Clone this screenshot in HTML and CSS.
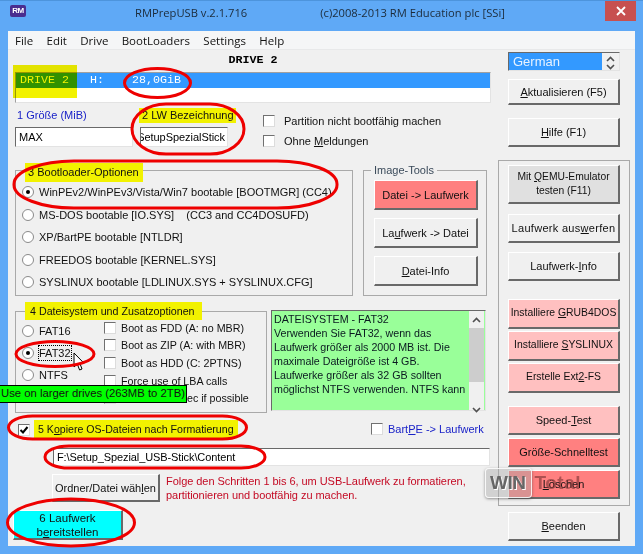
FILE: index.html
```html
<!DOCTYPE html>
<html lang="de">
<head>
<meta charset="utf-8">
<title>RMPrepUSB</title>
<link rel="stylesheet" href="styles.css">
</head>
<body>
<div class="window">
  <header class="titlebar">
    <span class="appicon">RM</span>
    <span class="title-a">RMPrepUSB v.2.1.716</span>
    <span class="title-b">(c)2008-2013 RM Education plc [SSi]</span>
    <span class="close"><svg width="10" height="10" viewBox="0 0 10 10"><path d="M1 1L9 9M9 1L1 9" stroke="#fff" stroke-width="1.8"/></svg></span>
  </header>
  <div class="client">
    <nav class="menu"><span>File</span><span>Edit</span><span>Drive</span><span>BootLoaders</span><span>Settings</span><span>Help</span></nav>
    <div class="panes">
      <main class="left">
        <div class="drive-title">DRIVE 2</div>
        <div class="listbox"><div class="list-row">DRIVE 2   H:    28,0GiB</div></div>
        <div class="row-fields">
          <div class="field-size">
            <div class="cap blue">1 Größe (MiB)</div>
            <div class="input">MAX</div>
          </div>
          <div class="field-name">
            <div class="cap"><span class="hl">2 LW Bezeichnung</span></div>
            <div class="input clip"><span>SetupSpezialStick</span></div>
          </div>
          <div class="field-checks">
            <label class="check"><i class="box"></i><span>Partition nicht bootfähig machen</span></label>
            <label class="check"><i class="box"></i><span>Ohne <u>M</u>eldungen</span></label>
          </div>
        </div>
        <div class="row-groups">
          <section class="group boot">
            <div class="legend hl">3 Bootloader-Optionen</div>
            <div class="radio"><i class="dot on"></i><span>WinPEv2/WinPEv3/Vista/Win7 bootable [BOOTMGR] (CC4)</span></div>
            <div class="radio"><i class="dot"></i><span>MS-DOS bootable [IO.SYS]    (CC3 and CC4DOSUFD)</span></div>
            <div class="radio"><i class="dot"></i><span>XP/BartPE bootable [NTLDR]</span></div>
            <div class="radio"><i class="dot"></i><span>FREEDOS bootable [KERNEL.SYS]</span></div>
            <div class="radio"><i class="dot"></i><span>SYSLINUX bootable [LDLINUX.SYS + SYSLINUX.CFG]</span></div>
          </section>
          <section class="group tools">
            <div class="legend plain">Image-Tools</div>
            <button class="btn red">Datei -&gt; Laufwerk</button>
            <button class="btn">La<u>u</u>fwerk -&gt; Datei</button>
            <button class="btn"><u>D</u>atei-Info</button>
          </section>
        </div>
        <div class="row-fs">
          <section class="group fs">
            <div class="legend hl">4 Dateisystem und Zusatzoptionen</div>
            <div class="fs-radios">
              <div class="radio"><i class="dot"></i><span>FAT16</span></div>
              <div class="radio"><i class="dot on"></i><span class="focus">FAT32</span></div>
              <div class="radio"><i class="dot"></i><span>NTFS</span></div>
            </div>
            <div class="fs-checks">
              <label class="check"><i class="box"></i><span>Boot as FDD (A: no MBR)</span></label>
              <label class="check"><i class="box"></i><span>Boot as ZIP (A: with MBR)</span></label>
              <label class="check"><i class="box"></i><span>Boot as HDD (C: 2PTNS)</span></label>
              <label class="check"><i class="box"></i><span>Force use of LBA calls</span></label>
              <label class="check"><i class="box"></i><span>Use 64hd/32sec if possible</span></label>
            </div>
          </section>
          <div class="infobox">
            <div class="info-text">DATEISYSTEM - FAT32<br>Verwenden Sie FAT32, wenn das<br>Laufwerk größer als 2000 MB ist. Die<br>maximale Dateigröße ist 4 GB.<br>Laufwerke größer als 32 GB sollten<br>möglichst NTFS verwenden. NTFS kann</div>
            <div class="scroll">
              <svg class="chev" width="9" height="6" viewBox="0 0 9 6"><path d="M1 5L4.5 1.5L8 5" fill="none" stroke="#505050" stroke-width="1.6"/></svg>
              <div class="thumb"></div>
              <svg class="chev" width="9" height="6" viewBox="0 0 9 6"><path d="M1 1L4.5 4.5L8 1" fill="none" stroke="#505050" stroke-width="1.6"/></svg>
            </div>
          </div>
        </div>
        <div class="row-copy">
          <i class="box checked"><svg width="10" height="10" viewBox="0 0 10 10"><path d="M1.5 5L4 7.5L8.5 2" fill="none" stroke="#000" stroke-width="2"/></svg></i>
          <span class="hl copy-label">5 K<u>o</u>piere OS-Dateien nach Formatierung</span>
          <label class="check bart"><i class="box"></i><span class="blue">Bart<u>P</u>E -&gt; Laufwerk</span></label>
        </div>
        <div class="input path">F:\Setup_Spezial_USB-Stick\Content</div>
        <div class="row-folder">
          <button class="btn folder">Ordner/Datei wäh<u>l</u>en</button>
          <p class="hint">Folge den Schritten 1 bis 6, um USB-Laufwerk zu formatieren,<br>partitionieren und bootfähig zu machen.</p>
        </div>
        <button class="btn cyan">6 Laufwerk<br>b<u>e</u>reitstellen</button>
      </main>
      <aside class="right">
        <div class="combo">
          <span class="combo-val">German</span>
          <span class="spin">
            <svg width="9" height="6" viewBox="0 0 9 6"><path d="M1 5L4.5 1.5L8 5" fill="none" stroke="#505050" stroke-width="1.6"/></svg>
            <svg width="9" height="6" viewBox="0 0 9 6"><path d="M1 1L4.5 4.5L8 1" fill="none" stroke="#505050" stroke-width="1.6"/></svg>
          </span>
        </div>
        <button class="btn side refresh"><u>A</u>ktualisieren (F5)</button>
        <button class="btn side help"><u>H</u>ilfe (F1)</button>
        <section class="group actions">
          <div class="cluster wide">
            <button class="btn qemu">Mit <u>Q</u>EMU-Emulator<br>testen (F11)</button>
            <button class="btn loose">Laufwerk aus<u>w</u>erfen</button>
            <button class="btn">Laufwerk-<u>I</u>nfo</button>
          </div>
          <div class="cluster tight">
            <button class="btn rose small">Installiere <u>G</u>RUB4DOS</button>
            <button class="btn rose small">Installiere <u>S</u>YSLINUX</button>
            <button class="btn rose small">Erstelle Ext<u>2</u>-FS</button>
          </div>
          <div class="cluster tight">
            <button class="btn rose">Speed-<u>T</u>est</button>
            <button class="btn red">Größe-Schnelltest</button>
            <button class="btn red"><u>L</u>öschen</button>
          </div>
        </section>
        <button class="btn side quit"><u>B</u>eenden</button>
      </aside>
    </div>
  </div>

  <div class="drive-mark"></div>
  <div class="tooltip">Use on larger drives (263MB to 2TB)</div>
  <svg class="pointer" width="12" height="20" viewBox="0 0 12 20"><path d="M1 1V15L4.3 12L6.6 18L9 17L6.8 11.2H11Z" fill="#fff" stroke="#000" stroke-width="1"/></svg>
  <svg class="marks" width="643" height="554" viewBox="0 0 643 554">
    <g fill="none" stroke="#ee0000" stroke-width="3">
      <ellipse cx="157.500" cy="83" rx="33" ry="14.500"/>
      <rect x="132" y="104" width="112" height="50" rx="34" ry="25"/>
      <rect x="14" y="161" width="323" height="47" rx="60" ry="23"/>
      <ellipse cx="55" cy="354" rx="39" ry="12.500"/>
      <rect x="8.500" y="416" width="238" height="23" rx="24" ry="11.500"/>
      <rect x="45" y="446" width="220" height="22" rx="24" ry="11"/>
      <ellipse cx="71" cy="522.500" rx="63.500" ry="23.500"/>
    </g>
  </svg>
  <div class="watermark"><span class="wm-win">WIN</span><span class="wm-total">Total</span></div>
</div>
</body>
</html>
```

FILE: styles.css
```css
* { box-sizing: border-box; }
html, body { margin: 0; padding: 0; }
body { width: 643px; height: 554px; overflow: hidden; background: #5fa9f6; font: 11px/14px "Liberation Sans", Arial, sans-serif; color: #111; }
.window { position: relative; width: 643px; height: 554px; background: #5fa9f6; padding: 0 8px 8px; border-top: 1px solid #4d94dc; overflow: hidden; display: flex; flex-direction: column; }

.titlebar { height: 30px; flex: none; display: flex; align-items: center; position: relative; font: 11.2px/16px "Open Sans", sans-serif; color: #1c2b3a; white-space: nowrap; }
.appicon { width: 16px; height: 12px; margin: -10px 0 0 2px; background: #4a2d8f; border-radius: 2px; color: #fff; font: bold 8px/12px "Liberation Sans", sans-serif; text-align: center; letter-spacing: -.5px; }
.title-a { margin: -7px 0 0 109px; }
.title-b { margin: -7px 0 0 73px; }
.close { position: absolute; right: -1px; top: 0; width: 31px; height: 20px; background: #c75050; display: flex; align-items: center; justify-content: center; }

.client { flex: none; width: 627px; height: 515px; background: #f0f0f0; display: flex; flex-direction: column; }
.menu { height: 19px; flex: none; background: #f5f6f7; border-bottom: 1px solid #e8e9ea; display: flex; gap: 13.3px; padding-left: 7px; font: 11.5px/19px "Open Sans", sans-serif; color: #111; }
.panes { flex: 1; display: flex; padding-left: 7px; }

.left { width: 476px; flex: none; }
.drive-title { height: 22px; text-align: center; font: bold 11.7px/20px "Liberation Mono", monospace; color: #000; }
.listbox { height: 31px; background: #fff; border: 1px solid; border-color: #a0a0a0 #e3e3e3 #e3e3e3 #a0a0a0; }
.list-row { height: 15px; background: #3399ff; color: #fff; font: 11.67px/15px "Liberation Mono", monospace; padding-left: 4px; white-space: pre; }

.row-fields { display: flex; height: 49px; padding-top: 5px; }
.cap { height: 19px; line-height: 15px; white-space: nowrap; }
.blue { color: #1a22c8; }
.hl { background: #f2f200; }
.field-size { width: 125px; }
.field-size .cap { padding-left: 2px; }
.field-name { width: 88px; }
.field-name .cap .hl { display: inline-block; width: 97px; margin-left: -1px; padding-left: 3px; }
.input { height: 20px; background: #fff; border: 1px solid; border-color: #696969 #e3e3e3 #e3e3e3 #696969; line-height: 18px; padding-left: 3px; color: #000; white-space: nowrap; }
.field-size .input { width: 118px; }
.clip { overflow: hidden; display: flex; justify-content: flex-end; padding: 0 2px 0 0; }
.clip span { flex: none; font-size: 11px; letter-spacing: -.05px; }
.field-checks { margin: 6px 0 0 35px; display: flex; flex-direction: column; gap: 7px; }
.check { display: flex; align-items: center; gap: 9px; height: 13px; white-space: nowrap; }
.box { flex: none; display: block; width: 12px; height: 12px; background: #fff; border: 1px solid; border-color: #707070 #dcdcdc #dcdcdc #707070; }

.row-groups { display: flex; gap: 10px; margin-top: 18px; }
.group { position: relative; border: 1px solid #a9a9a9; }
.legend { position: absolute; white-space: nowrap; }
.legend.plain { left: 7px; top: -8px; padding: 0 3px; background: #f0f0f0; color: #3a4a5a; }
.boot { width: 338px; height: 126px; padding: 10px 0 0 6px; }
.boot .legend { left: 9px; top: -8px; width: 118px; height: 19px; line-height: 19px; padding-left: 3px; }
.radio { height: 22.5px; display: flex; align-items: center; gap: 5px; white-space: pre; }
.dot { flex: none; width: 12px; height: 12px; border-radius: 50%; background: #fff; border: 1px solid #8a8a8a; box-shadow: inset 0 0 0 1px #fff; position: relative; }
.dot.on::after { content: ""; position: absolute; left: 3px; top: 3px; width: 4px; height: 4px; border-radius: 50%; background: #000; }
.tools { width: 124px; height: 126px; padding: 9px 8px 0 10px; display: flex; flex-direction: column; gap: 8px; }

.btn { display: block; padding: 0; font: 11px/14px "Liberation Sans", Arial, sans-serif; color: #111; background: #f0f0f0; border-style: solid; border-width: 1px 2px 2px 1px; border-color: #fff #696969 #696969 #fff; text-align: center; height: 30px; width: 100%; white-space: nowrap; }
.red { background: #ff8080; }
.rose { background: #ffc0c0; }
.small { font-size: 10.4px; }
.loose { letter-spacing: .3px; }
.qemu { height: 39px; background: #e0e0e0; font-size: 10.3px; }
.cyan { width: 110px; height: 30px; margin: 8px 0 0 -2px; background: #00ffff; line-height: 14px; font-size: 11.5px; }

.row-fs { display: flex; margin-top: 15px; height: 102px; }
.fs { flex: none; width: 252px; height: 102px; display: flex; padding-left: 6px; }
.fs .legend { left: 9px; top: -10px; width: 177px; height: 18px; line-height: 18px; padding-left: 5px; font-size: 10.7px; }
.fs-radios { flex: none; width: 82px; padding-top: 8px; }
.fs-radios .radio { height: 22px; }
.focus { outline: 1px dotted #000; outline-offset: 0; }
.fs-checks { padding-top: 9px; display: flex; flex-direction: column; gap: 4.7px; font-size: 10.7px; }
.fs-checks .check { gap: 5px; }
.infobox { flex: none; margin: -1px 0 0 4px; width: 215px; height: 101px; background: #99ff99; border: 1px solid; border-color: #696969 #e3e3e3 #e3e3e3 #696969; display: flex; }
.info-text { flex: 1; min-width: 0; overflow: hidden; padding: 1px 0 0 2px; white-space: nowrap; color: #0a1a20; font-size: 10.7px; }
.scroll { flex: none; width: 15px; background: #f0f0f0; display: flex; flex-direction: column; align-items: center; margin-right: 1px; }
.chev { margin: 6px 0 5px; flex: none; }
.thumb { width: 15px; height: 54px; background: #cdcdcd; margin-bottom: 19px; flex: none; }

.row-copy { display: flex; align-items: center; height: 24px; margin-top: 4px; position: relative; padding-left: 3px; }
.checked { display: flex; align-items: center; justify-content: center; margin-top: 2px; }
.copy-label { margin-left: 4px; width: 204px; height: 18px; line-height: 18px; padding-left: 4px; white-space: nowrap; font-size: 10.6px; }
.bart { margin-left: 133px; gap: 5px; }
.path { width: 437px; height: 18px; margin: 7px 0 0 38px; line-height: 16px; padding-left: 3px; letter-spacing: -.1px; }
.row-folder { display: flex; margin: 8px 0 0 37px; }
.folder { width: 108px; height: 28px; flex: none; }
.hint { margin: 0 0 0 6px; color: #c40a24; line-height: 14px; white-space: nowrap; letter-spacing: -.05px; }

.right { width: 132px; margin-left: 7px; flex: none; display: flex; flex-direction: column; }
.combo { width: 112px; height: 19px; margin: 2px 0 0 10px; background: #fff; border: 1px solid; border-color: #696969 #e3e3e3 #e3e3e3 #696969; display: flex; }
.combo-val { flex: 1; background: #3399ff; color: #e8f2ff; font: 13px/17px "Liberation Sans", sans-serif; padding-left: 4px; }
.spin { flex: none; width: 17px; background: #f0f0f0; display: flex; flex-direction: column; align-items: center; justify-content: space-between; padding: 3px 0 0; }
.side { width: 112px; margin-left: 10px; flex: none; }
.refresh { height: 26px; margin-top: 8px; }
.help { height: 29px; margin-top: 13px; }
.actions { width: 132px; height: 346px; margin-top: 13px; padding: 4px 9px 0; display: flex; flex-direction: column; }
.cluster { display: flex; flex-direction: column; }
.wide { gap: 9.5px; }
.wide .btn:not(.qemu) { height: 29px; }
.tight { gap: 2.5px; margin-top: 18px; }
.tight:last-child { margin-top: 13px; }
.tight .btn { height: 29.5px; }
.quit { height: 29px; margin-top: 6px; }

.drive-mark { position: absolute; left: 13px; top: 64px; width: 64px; height: 33px; background: #f2f200; mix-blend-mode: multiply; }
.tooltip { position: absolute; left: 0; top: 384px; width: 187px; height: 18px; background: #00ff00; border: 1px solid #000; border-left: 0; font: 11.3px/15px "Liberation Sans", sans-serif; color: #111; white-space: nowrap; padding-left: 1px; }
.pointer { position: absolute; left: 73px; top: 351px; }
.marks { position: absolute; left: 0; top: -1px; pointer-events: none; }
.watermark { position: absolute; left: 485px; top: 467px; width: 96px; height: 30px; display: flex; align-items: center; font: bold 19px/28px "Liberation Sans", sans-serif; }
.wm-win { width: 49px; height: 30px; padding-left: 4px; color: #666; background: rgba(170,170,170,.45); border: 1px solid rgba(255,255,255,.85); border-radius: 4px; box-shadow: 0 1px 3px rgba(60,60,60,.55); text-shadow: 1px 1px 0 #fff; letter-spacing: -.5px; }
.wm-total { margin-left: 3px; color: rgba(120,50,50,.6); letter-spacing: .5px; }
```
